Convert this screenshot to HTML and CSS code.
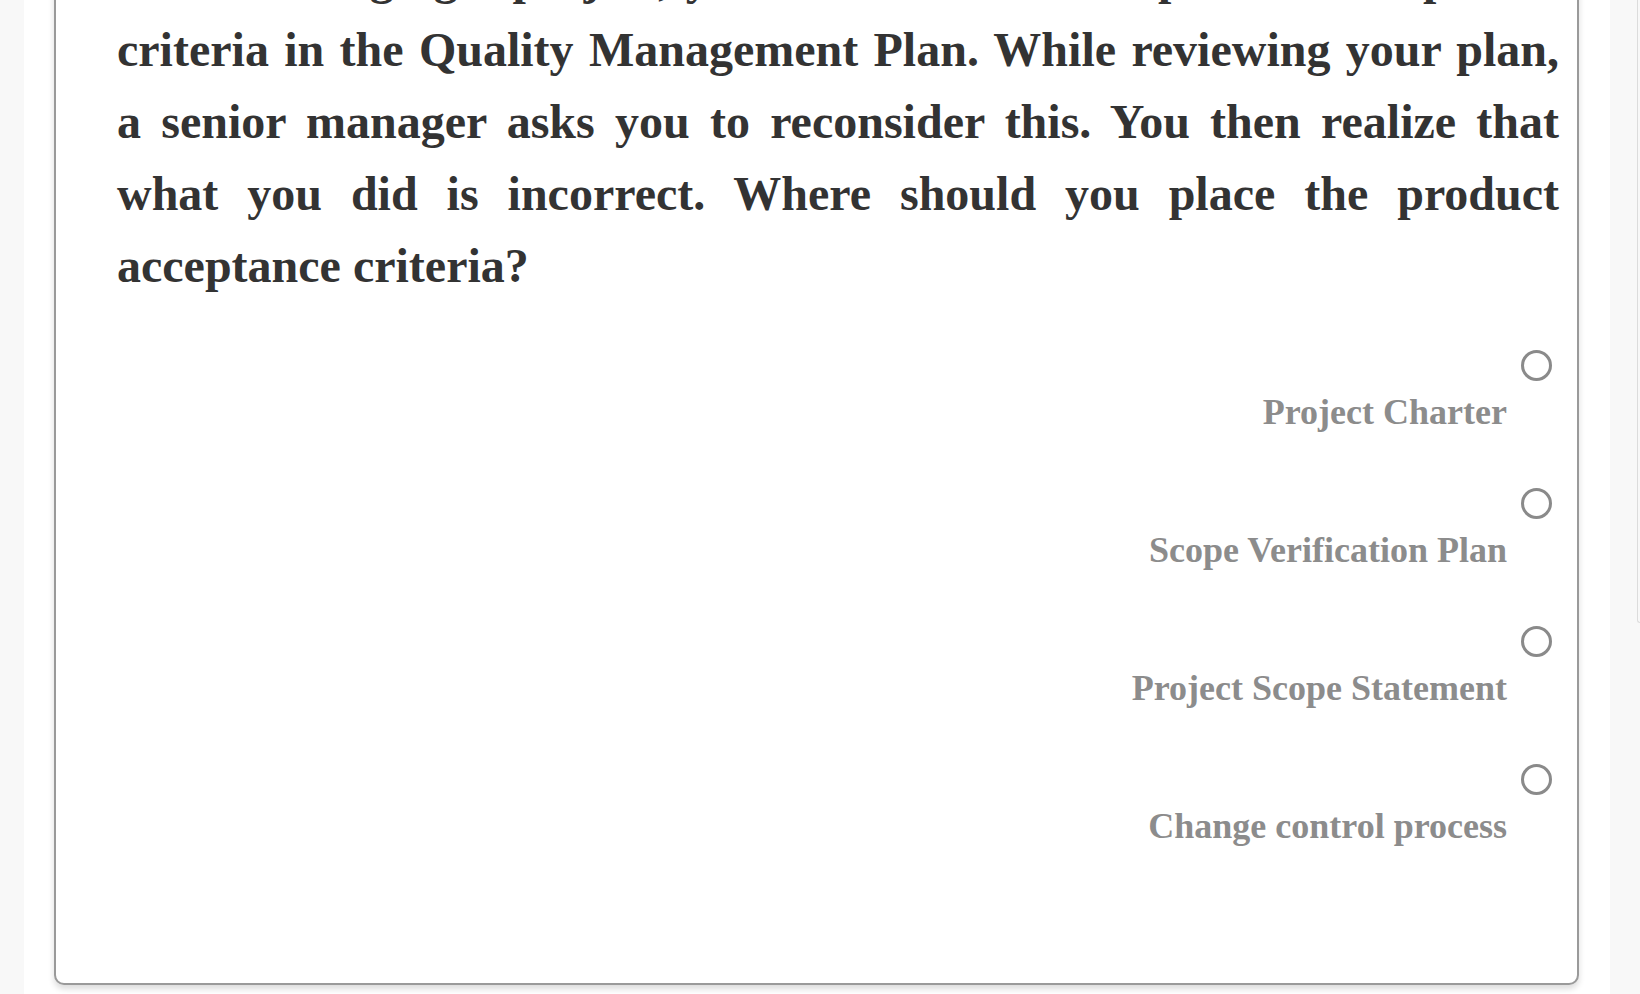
FILE: index.html
```html
<!DOCTYPE html>
<html lang="en">
<head>
<meta charset="utf-8">
<title>Question</title>
<link rel="stylesheet" href="styles.css">
</head>
<body>
  <div class="gutter-left"></div>
  <main class="main">
    <section class="card">
      <p class="question">While managing a project, you have included the product acceptance criteria in the Quality Management Plan. While reviewing your plan, a senior manager asks you to reconsider this. You then realize that what you did is incorrect. Where should you place the product acceptance criteria?</p>
      <div class="options">
        <label class="option"><span class="radio"></span><span class="label">Project Charter</span></label>
        <label class="option"><span class="radio"></span><span class="label">Scope Verification Plan</span></label>
        <label class="option"><span class="radio"></span><span class="label">Project Scope Statement</span></label>
        <label class="option"><span class="radio"></span><span class="label">Change control process</span></label>
      </div>
    </section>
  </main>
  <aside class="gutter-right"><div class="side-box"></div></aside>
</body>
</html>
```
FILE: styles.css
```css
html, body {
  margin: 0;
  padding: 0;
}
body {
  display: flex;
  height: 994px;
  overflow: hidden;
  background: #f8f8f8;
  font-family: "Liberation Serif", "Times New Roman", serif;
}
.gutter-left {
  width: 24px;
  flex: none;
}
.main {
  width: 1586px;
  flex: none;
  background: #ffffff;
  padding: 0 31px 0 30px;
  box-sizing: border-box;
}
.card {
  margin-top: -90px;
  border: 2px solid #9a9a9a;
  border-radius: 10px;
  background: #fff;
  box-shadow: 0 4px 6px rgba(0, 0, 0, 0.14);
  padding: 30px 18px 81px 61px;
}
.question {
  margin: 0;
  font-size: 48px;
  line-height: 72px;
  font-weight: bold;
  color: #333333;
  text-align: justify;
}
.options {
  margin-top: 48px;
  display: flex;
  flex-direction: column;
  align-items: flex-end;
}
.option {
  display: flex;
  flex-direction: column;
  align-items: flex-end;
  margin-bottom: 55px;
}
.radio {
  display: block;
  width: 25px;
  height: 25px;
  border: 3px solid #8a8a8a;
  border-radius: 50%;
  margin-right: 7px;
}
.label {
  display: block;
  margin-top: 11px;
  margin-right: 52px;
  font-size: 36px;
  line-height: 41px;
  font-weight: bold;
  color: #8c8c8c;
}
.gutter-right {
  flex: 1;
  padding-left: 27px;
}
.side-box {
  height: 623px;
  border-left: 1px solid #dcdcdc;
  border-bottom: 1px solid #dcdcdc;
  border-bottom-left-radius: 8px;
  box-sizing: border-box;
}
```
